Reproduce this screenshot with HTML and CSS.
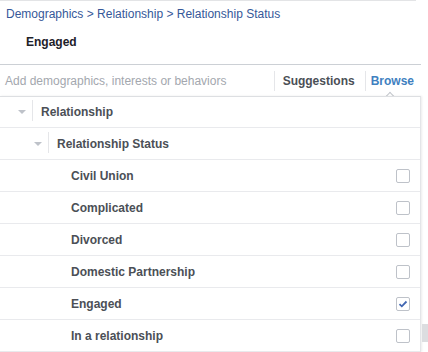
FILE: index.html
```html
<!DOCTYPE html>
<html lang="en">
<head>
    <meta charset="UTF-8">
    <title>Detailed Targeting</title>
    <link rel="stylesheet" href="styles.css">
</head>
<body>
    <div class="panel">
        <div class="selected-box">
            <div class="crumbs">Demographics &gt; Relationship &gt; Relationship Status</div>
            <div class="chosen">Engaged</div>
        </div>
        <div class="search">
            <span class="placeholder">Add demographics, interests or behaviors</span>
            <span class="tab">Suggestions</span>
            <span class="tab active">Browse</span>
        </div>
        <div class="list">
            <div class="row level-1 first">
                <span class="caret"></span><span class="label">Relationship</span>
            </div>
            <div class="row level-2">
                <span class="caret"></span><span class="label">Relationship Status</span>
            </div>
            <div class="row leaf"><span class="label">Civil Union</span><span class="check"></span></div>
            <div class="row leaf"><span class="label">Complicated</span><span class="check"></span></div>
            <div class="row leaf"><span class="label">Divorced</span><span class="check"></span></div>
            <div class="row leaf"><span class="label">Domestic Partnership</span><span class="check"></span></div>
            <div class="row leaf"><span class="label">Engaged</span><span class="check checked">
                <svg width="10" height="8" viewBox="0 0 10 8"><path d="M1.5 4.2 L3.8 6.3 L8.5 1.5" fill="none" stroke="#4267b2" stroke-width="1.8"/></svg>
            </span></div>
            <div class="row leaf"><span class="label">In a relationship</span><span class="check"></span></div>
            <div class="scroll-thumb"></div>
        </div>
    </div>
</body>
</html>
```

FILE: styles.css
```css
body {
    margin: 0;
    background-color: #fff;
    font-family: "Liberation Sans", Arial, sans-serif;
    font-size: 12px;
    color: #4b4f56;
}

.panel {
    width: 421px;
    position: relative;
}

.selected-box {
    width: 416px;
    border-top: 1px solid #e3e4e6;
    padding: 5px 0 14px 0;
}

.crumbs {
    padding-left: 6px;
    line-height: 16px;
    color: #365899;
}

.chosen {
    margin-top: 12px;
    padding-left: 26px;
    line-height: 16px;
    font-weight: bold;
    color: #1d2129;
}

.search {
    display: flex;
    align-items: center;
    height: 31px;
    border-top: 1px solid #ccd0d5;
    position: relative;
}

.placeholder {
    flex: 1;
    padding-left: 5px;
    color: #a3a7ae;
}

.tab {
    font-weight: bold;
    color: #4b4f56;
    border-left: 1px solid #e5e6e9;
    line-height: 20px;
    padding: 0 10px 0 8px;
}

.tab.active {
    color: #4080c0;
    padding: 0 7px 0 5px;
}

.tab.active::after {
    content: "";
    position: absolute;
    right: 28px;
    bottom: -3px;
    width: 5px;
    height: 5px;
    border-left: 1px solid #c4c7cc;
    border-top: 1px solid #c4c7cc;
    transform: rotate(45deg);
}

.list {
    border-top: 1px solid #dddfe2;
    border-right: 1px solid #e4e5e8;
    box-shadow: 1px 0 2px rgba(0, 0, 0, 0.08);
    position: relative;
}

.row {
    display: flex;
    align-items: center;
    height: 31px;
    border-bottom: 1px solid #e9eaed;
    font-weight: bold;
}

.row.first {
    height: 30px;
}

.caret {
    width: 0;
    height: 0;
    border-left: 4px solid transparent;
    border-right: 4px solid transparent;
    border-top: 4px solid #bec2c9;
    position: relative;
}

.caret::after {
    content: "";
    position: absolute;
    left: 10px;
    top: -14px;
    width: 1px;
    height: 21px;
    background-color: #e5e6e9;
}

.level-1 .caret {
    margin-left: 18px;
    margin-right: 15px;
}

.level-2 .caret {
    margin-left: 34px;
    margin-right: 15px;
}

.leaf .label {
    flex: 1;
    padding-left: 71px;
}

.check {
    width: 12px;
    height: 12px;
    border: 1px solid #bec2c9;
    border-radius: 2px;
    margin-right: 10px;
    display: flex;
    align-items: center;
    justify-content: center;
    background-color: #fff;
}

.scroll-thumb {
    position: absolute;
    right: -8px;
    top: 227px;
    width: 6px;
    height: 18px;
    background-color: #dcdde0;
}
```
